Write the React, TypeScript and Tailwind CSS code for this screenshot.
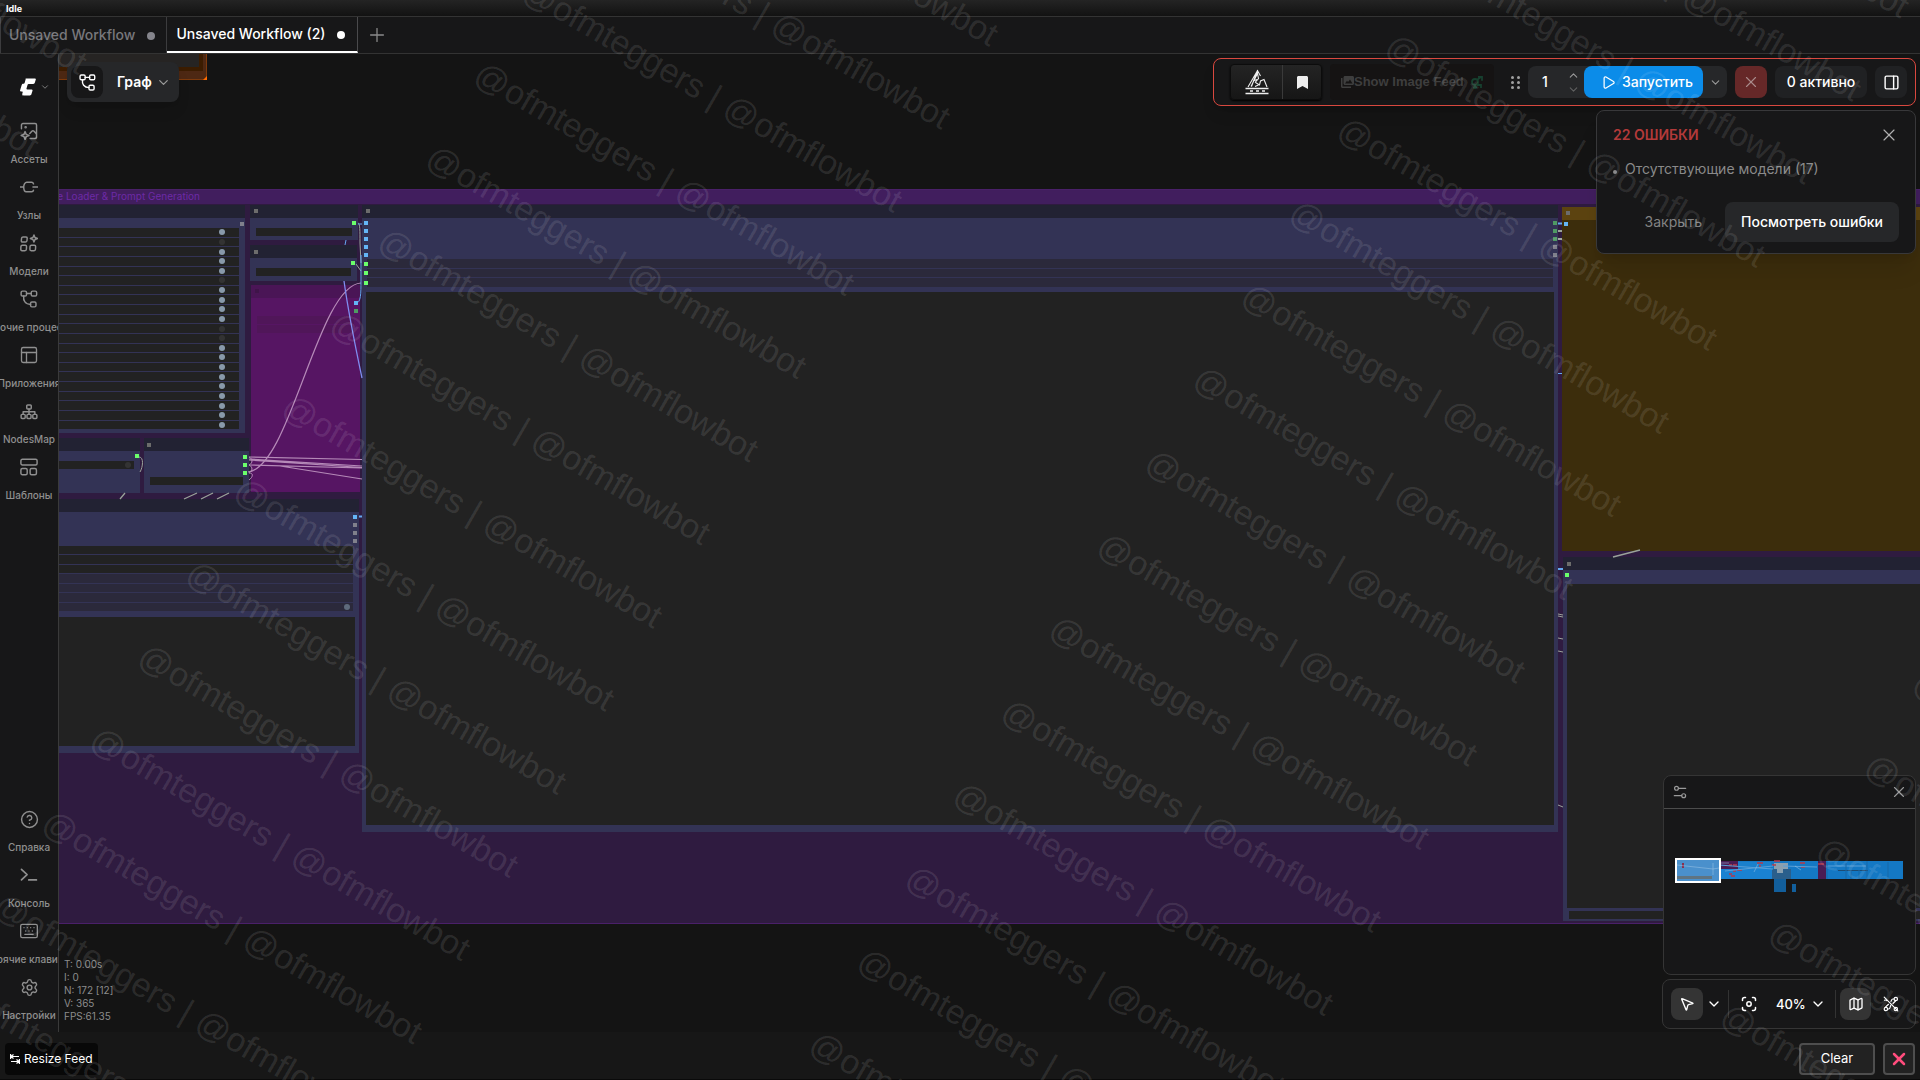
import type { CSSProperties, ReactNode } from "react";
import {
  ChevronDown,
  ChevronUp,
  CircleHelp,
  Keyboard,
  Map as MapIcon,
  MousePointer2,
  PanelRight,
  PanelsTopLeft,
  Play,
  Plus,
  Settings,
  X,
} from "lucide-react";

type Box = { x: number; y: number; w: number; h: number };

/* The canvas viewport starts at this point of the graph. */
const VIEW = { x: 59, y: 54 };

const place = (b: Box): CSSProperties => ({
  left: b.x - VIEW.x,
  top: b.y - VIEW.y,
  width: b.w,
  height: b.h,
});

function Rect({ className, ...b }: Box & { className: string }) {
  return <div className={`absolute ${className}`} style={place(b)} />;
}

const SLOT: Record<string, string> = {
  green: "bg-[#6bff6b]",
  dim: "bg-[#4f9a63]",
  blue: "bg-[#64b5f6]",
  gray: "bg-[#80808c]",
  mark: "bg-[#6c6c6c]",
  ghost: "bg-[#3f1449]",
};

function Slot({ x, y, kind, size = 4 }: { x: number; y: number; kind: string; size?: number }) {
  return <Rect x={x} y={y} w={size} h={size} className={SLOT[kind]} />;
}

function Node({
  x,
  y,
  w,
  h,
  title = "bg-[#222233]",
  body = "bg-[#333355]",
  children,
}: Box & { title?: string; body?: string; children?: ReactNode }) {
  return (
    <div className={`absolute flex flex-col ${body}`} style={place({ x, y, w, h })}>
      <div className={`h-[13px] shrink-0 ${title}`} />
      {children}
    </div>
  );
}

const TOGGLES = [
  true, false, true, true, true, false, true, true, true, true, false,
  false, true, true, true, true, true, true, true, true, true,
];

const SLOTS: [number, number, string][] = [
  [240, 222, "gray"],
  [254, 209, "mark"],
  [352, 221, "green"],
  [254, 250, "mark"],
  [351, 261, "green"],
  [255, 289, "ghost"],
  [354, 301, "blue"],
  [354, 309, "dim"],
  [366, 209, "mark"],
  [364, 221, "blue"],
  [364, 229, "blue"],
  [364, 237, "blue"],
  [364, 245, "blue"],
  [364, 253, "blue"],
  [364, 262, "green"],
  [364, 271, "green"],
  [364, 281, "green"],
  [1553, 221, "dim"],
  [1553, 229, "dim"],
  [1553, 237, "dim"],
  [1553, 245, "gray"],
  [1553, 253, "gray"],
  [135, 454, "green"],
  [147, 443, "mark"],
  [243, 455, "green"],
  [243, 463, "green"],
  [243, 471, "green"],
  [353, 515, "blue"],
  [353, 523, "gray"],
  [353, 531, "gray"],
  [353, 539, "gray"],
  [1566, 211, "mark"],
  [1564, 222, "blue"],
  [1567, 562, "mark"],
  [1565, 573, "green"],
];

function Graph() {
  return (
    <div className="absolute inset-0 overflow-hidden">
      {/* orange group */}
      <Rect x={40} y={40} w={167} h={40} className="border border-[#7d3a0c] bg-[#4d2813]" />
      <Rect x={40} y={40} w={163} h={31} className="bg-[#3b1c00]" />
      <Rect x={40} y={40} w={159} h={27} className="bg-[#262423]" />
      <Rect x={203} y={76} w={4} h={4} className="bg-[#ff6a00] [clip-path:polygon(100%_0,100%_100%,0_100%)]" />

      {/* purple group */}
      <div
        className="absolute -right-10 flex flex-col border border-[#4a2069] bg-[#2f1b40]"
        style={{ left: -200, top: 189 - VIEW.y, height: 735 }}
      >
        <div className="h-[14px] bg-[#411e5e]" />
      </div>
      <div
        className="absolute w-[300px] text-right text-[10px] leading-[14px] whitespace-nowrap text-[#6d2aa6]"
        style={{ left: 200 - 300 - VIEW.x, top: 189 - VIEW.y }}
      >
        Image Loader &amp; Prompt Generation
      </div>

      {/* toggle list */}
      <Node x={20} y={205} w={225} h={228}>
        <div className="mt-[10px] mr-[6px] flex h-[201px] flex-col gap-px">
          {TOGGLES.map((on, i) => (
            <div key={i} className="flex flex-1 items-center justify-end bg-[#222222] pr-[14px]">
              <span className={`size-[6px] rounded-full ${on ? "bg-[#8899aa]" : "bg-[#333333]"}`} />
            </div>
          ))}
        </div>
      </Node>

      <Node x={250} y={205} w={108} h={35}>
        <div className="mx-[6px] mt-[10px] h-2 bg-[#222222]" />
      </Node>
      <Node x={250} y={245} w={107} h={36}>
        <div className="mx-[6px] mt-[10px] h-2 bg-[#222222]" />
      </Node>
      <Node x={251} y={285} w={109} h={207} title="bg-[#4a1556]" body="bg-[#561563]">
        <div className="mx-[6px] mt-[18px] h-2 bg-[#501659]" />
        <div className="mx-[6px] mt-px h-2 bg-[#501659]" />
      </Node>

      {/* main preview node */}
      <Node x={362} y={205} w={1196} h={627}>
        <div className="mx-[5px] mt-[41px] flex h-7 flex-col gap-px">
          <div className="flex-1 bg-[#2b293b]" />
          <div className="flex-1 bg-[#2b293b]" />
          <div className="flex-1 bg-[#2b293b]" />
        </div>
        <div className="mx-1 mt-[5px] mb-[7px] flex-1 bg-[#222222]" />
      </Node>

      <Node x={20} y={438} w={120} h={55}>
        <div className="mt-[10px] mr-[6px] flex h-2 items-center justify-end bg-[#222222] pr-[3px]">
          <span className="size-[6px] rounded-full bg-[#333333]" />
        </div>
      </Node>
      <Node x={144} y={438} w={105} h={55}>
        <div className="mx-[6px] mt-[26px] h-2 bg-[#222222]" />
      </Node>

      <Node x={20} y={499} w={339} h={254}>
        <div className="mt-[34px] mr-[6px] flex h-[65px] flex-col gap-px">
          <div className="flex-1 bg-[#222222]" />
          <div className="flex-1 bg-[#222222]" />
          <div className="flex-1 bg-[#222222]" />
          <div className="flex-1 bg-[#2b293b]" />
          <div className="flex-1 bg-[#2b293b]" />
          <div className="flex-1 bg-[#2b293b]" />
          <div className="flex flex-1 items-center justify-end bg-[#2b293b] pr-[3px]">
            <span className="size-[6px] rounded-full bg-[#5e6a7c]" />
          </div>
        </div>
        <div className="mt-[6px] mr-1 mb-[7px] flex-1 bg-[#222222]" />
      </Node>

      <Node x={1562} y={207} w={500} h={344} title="bg-[#5c4310]" body="bg-[#3c2d0c]" />
      <Node x={1563} y={557} w={500} h={364}>
        <div className="mt-[14px] ml-1 h-[324px] bg-[#222222]" />
        <div className="mt-[3px] ml-[6px] h-2 bg-[#222222]" />
      </Node>

      {/* links */}
      <svg
        className="absolute"
        style={place({ x: 0, y: 0, w: 1920, h: 1080 })}
        viewBox="0 0 1920 1080"
        fill="none"
        strokeWidth="1"
      >
        <g stroke="#9aa39a">
          <path d="M358 223c2 0 2 8 2 20l1 20M356 264l5 7" />
          <path d="M139 457c5 0 4 10 1 15" />
          <path d="M120 499l5-6M184 499l13-6M201 499l12-6M217 499l12-6M1613 557l27-7" strokeWidth="1.300" />
          <path d="M1558 614l5 1M1558 616l5 1M1558 638l5 1M1558 651l5 1M1558 805l5 2" />
          <path d="M1558 231h4M1558 239h4" strokeWidth="2" />
        </g>
        <g stroke="#b58ab8">
          <path d="M248 472C290 468 318 285 361 283" strokeWidth="1.200" />
          <path d="M249 457L362 459.500M249 459L362 466M249 460L362 467.500M249 465L362 468M280 466L362 479" strokeWidth="1.200" />
          <path d="M249 457c4 2 4 6 0 8c4 2 4 6 0 8c5 0 4 4 0 7" />
        </g>
        <path d="M344 281C348 310 355 345 362 378" stroke="#7f8df0" strokeWidth="1.300" />
        <g stroke="#64a8f0">
          <path d="M346 240l-1 5" />
          <path d="M358 224h4M356 303c5 0 5-10 5-22v-26" />
          <path d="M359 516.500h3M1558 223.500h4M1558 569h5" strokeWidth="2" />
          <path d="M1558 373.500h4" />
        </g>
      </svg>

      {SLOTS.map(([x, y, kind]) => (
        <Slot key={`${x}-${y}`} x={x} y={y} kind={kind} />
      ))}
    </div>
  );
}

/* ---------- icons ---------- */

function Glyph({ children, size = 18, sw = 1.3 }: { children: ReactNode; size?: number; sw?: number }) {
  return (
    <svg
      width={size}
      height={size}
      viewBox="0 0 16 16"
      fill="none"
      stroke="currentColor"
      strokeWidth={sw}
      strokeLinecap="round"
      strokeLinejoin="round"
      aria-hidden="true"
    >
      {children}
    </svg>
  );
}

const AssetsIcon = () => (
  <Glyph>
    <path d="M1.300 6V2.600c0-.7.6-1.300 1.300-1.300h10.800c.7 0 1.300.6 1.300 1.300v10.800c0 .7-.6 1.300-1.300 1.300H9" />
    <path d="M14.500 10.500l-2-2.200c-.6-.6-1.400-.6-2 0L8.700 10.300" />
    <path d="M4.500 8.500l1 2.500 2.500 1-2.500 1-1 2.500-1-2.500-2.500-1 2.500-1z" />
    <circle cx="5" cy="4.700" r=".5" />
  </Glyph>
);
const NodeIcon = () => (
  <Glyph>
    <path d="M.2 8h3M11.500 8h4.300M12 5.200c-.2-.9-.8-1.500-1.700-1.500H6C4.500 3.700 3.300 6 3.300 8s.8 4.300 2.300 4.300h4.700c1 0 1.600-.7 1.700-1.500" />
  </Glyph>
);
const ModelsIcon = () => (
  <Glyph>
    <rect x="1.800" y="2.600" width="5" height="4.600" rx="1.200" transform="skewX(-6)" />
    <rect x="1.400" y="10" width="5" height="4.800" rx="1.200" transform="skewX(-3)" />
    <rect x="9.500" y="10" width="5" height="4.800" rx="1.200" transform="skewX(-3)" />
    <path d="M12.400.8l.9 2.300 2.300.9-2.300.9-.9 2.300-.9-2.300L9.200 4l2.300-.9z" />
  </Glyph>
);
const WorkflowIcon = ({ size = 18 }: { size?: number }) => (
  <Glyph size={size}>
    <rect x="1" y="1" width="4.800" height="4.400" rx="1.200" />
    <rect x="10" y="1" width="4.800" height="4.400" rx="1.200" />
    <rect x="9.400" y="10.600" width="4.800" height="4.400" rx="1.200" />
    <path d="M5.800 3.200H10M3.300 5.400c-.6 4 1.400 7.400 6.100 7.400" />
  </Glyph>
);
const SitemapIcon = () => (
  <Glyph>
    <rect x="6" y="2.600" width="4" height="3.600" rx=".8" />
    <rect x="1" y="11" width="3.600" height="3.600" rx=".8" />
    <rect x="6.200" y="11" width="3.600" height="3.600" rx=".8" />
    <rect x="11.400" y="11" width="3.600" height="3.600" rx=".8" />
    <path d="M8 6.200v4.800M2.800 11V8.600h10.400v2.400" />
  </Glyph>
);
const TemplateIcon = () => (
  <Glyph>
    <rect x=".8" y="1.200" width="14.400" height="5" rx="1.300" />
    <rect x=".8" y="9.300" width="5.600" height="5.500" rx="1.300" />
    <rect x="9" y="9.300" width="5.600" height="5.500" rx="1.300" />
  </Glyph>
);
const ConsoleIcon = () => (
  <Glyph sw={1.5}>
    <path d="M1.300 3l5 4.600-5 4.800M7.800 12.400h6.800" />
  </Glyph>
);
const SlidersIcon = () => (
  <Glyph size={14} sw={1.4}>
    <circle cx="4" cy="3.800" r="2.200" />
    <path d="M6.200 3.800H14.500M1.500 12.200h8.300" />
    <circle cx="12.200" cy="12.200" r="2.200" />
  </Glyph>
);
const FocusIcon = () => (
  <Glyph size={16} sw={1.5}>
    <path d="M1.500 4.500v-1c0-1.100.9-2 2-2h1M11.500 1.500h1c1.100 0 2 .9 2 2v1M14.500 11.500v1c0 1.100-.9 2-2 2h-1M4.500 14.500h-1c-1.100 0-2-.9-2-2v-1" />
    <circle cx="8" cy="8" r="2.200" />
  </Glyph>
);
const LinksOffIcon = () => (
  <Glyph size={16} sw={1.2}>
    <path d="M1.200 1.200l13.600 13.600" />
    <circle cx="12.800" cy="3" r="1.700" />
    <circle cx="2.900" cy="13" r="1.700" />
    <circle cx="12.800" cy="13" r="1.700" />
    <path d="M11 3H9.800C8.600 3 8.300 4.200 8 5.300M4.700 13h1c1.200 0 1.600-1.800 2-3.600M1.500 4.200c.8-.4 1.500-.2 2.300.3M5.500 8.300L2.800 10.800M10 7.500l2.500-2.500" />
  </Glyph>
);
const LogoIcon = () => (
  <svg width="16" height="18" viewBox="0 0 16 18" fill="#ffffff" aria-hidden="true">
    <path d="M6 .5h9c.7 0 1 .5.8 1.100l-1 3.200c-.2.700-.8 1.200-1.500 1.200H8.600c-.5 0-.9.3-1 .8L6.500 10.400c-.2.600.2 1.100.8 1.100h4.300c.7 0 1.100.5.9 1.200l-1.100 3.600c-.2.700-.8 1.200-1.500 1.200H3.600c-1 0-1.600-.7-1.300-1.700l.4-1.500c.1-.5-.1-.8-.6-.8H1c-.7 0-1.100-.5-.9-1.200L1.700 7c.2-.7.8-1.200 1.500-1.200h.4c.5 0 .8-.3 1-.8l1-3.400C5.700.9 5.400.5 6 .5z" />
  </svg>
);
const RigIcon = () => (
  <svg width="24" height="26" viewBox="0 0 24 26" fill="none" stroke="#eeeeee" strokeWidth="1.100" aria-hidden="true">
    <path d="M3 18L12.500 1.500l3 5.500M6 17.500l6.500-13 1 5-3.500 4M12.500 1.500L8.500 12l-2 5.500M8 12l4-1.500M10.500 13.500l4 2.500 1-4 3.500-1.500 3 7.500M10 17.500l3.500-1.500" />
    <path d="M.5 19.500h23M.5 24.500h23M5 22h3M11 22h3M17 22h3" strokeWidth="1.500" />
  </svg>
);

/* ---------- bars ---------- */

function TabBar() {
  return (
    <nav className="flex h-[38px] shrink-0 items-stretch border-y border-[#333333] bg-[#171718] text-sm font-medium">
      <button type="button" className="flex items-center gap-3 border-x border-[#3c3c3e] pr-[11px] pl-2 text-[#78787c]">
        Unsaved Workflow
        <span className="mt-[2px] size-2 rounded-full bg-[#85858c]" />
      </button>
      <button
        type="button"
        className="flex items-center gap-[12px] border-r border-b-2 border-r-[#4a4a4c] border-b-white pr-3 pl-[9px] text-white"
      >
        Unsaved Workflow (2)
        <span className="mt-[2px] size-2 rounded-full bg-white" />
      </button>
      <button type="button" aria-label="New workflow" className="grid w-[38px] place-items-center text-[#8a8a8a]">
        <Plus className="size-[22px]" strokeWidth={1.4} />
      </button>
    </nav>
  );
}

function SideItem({ icon, label }: { icon: ReactNode; label: string }) {
  return (
    <button type="button" className="flex h-14 w-full shrink-0 flex-col items-center gap-[10px] overflow-hidden pt-[6px]">
      <span className="grid h-5 shrink-0 place-items-center">{icon}</span>
      <span className="text-[10px] leading-4 font-medium whitespace-nowrap">{label}</span>
    </button>
  );
}

function Sidebar() {
  return (
    <aside className="flex w-[59px] shrink-0 flex-col justify-between border-r border-[#3a3a3a] bg-[#171718] text-[#8f8f8f]">
      <div className="flex flex-col">
        <button type="button" aria-label="Menu" className="flex h-[61px] items-center gap-1 pt-1 pl-5">
          <LogoIcon />
          <ChevronDown className="size-[10px]" />
        </button>
        <SideItem icon={<AssetsIcon />} label="Ассеты" />
        <SideItem icon={<NodeIcon />} label="Узлы" />
        <SideItem icon={<ModelsIcon />} label="Модели" />
        <SideItem icon={<WorkflowIcon />} label="Рабочие процессы" />
        <SideItem icon={<PanelsTopLeft className="size-5" strokeWidth={1.6} />} label="Приложения" />
        <SideItem icon={<SitemapIcon />} label="NodesMap" />
        <SideItem icon={<TemplateIcon />} label="Шаблоны" />
      </div>
      <div className="flex flex-col pb-[5px]">
        <SideItem icon={<CircleHelp className="size-[19px]" strokeWidth={1.8} />} label="Справка" />
        <SideItem icon={<ConsoleIcon />} label="Консоль" />
        <SideItem icon={<Keyboard className="size-5" strokeWidth={1.6} />} label="Горячие клавиши" />
        <SideItem icon={<Settings className="size-[19px]" strokeWidth={1.8} />} label="Настройки" />
      </div>
    </aside>
  );
}

function ActionBar() {
  return (
    <div className="flex h-12 items-center rounded-lg border border-[#d9483f] bg-[#171718] pr-2 pl-4 text-sm font-medium text-white shadow-lg">
      <div className="flex h-9 overflow-hidden rounded border border-[#0c0c0c] bg-gradient-to-b from-[#242424] to-[#161616] shadow-[0_1px_2px_#000]">
        <button type="button" aria-label="Manager" className="grid w-[52px] place-items-center border-r border-[#3a3a3a]">
          <RigIcon />
        </button>
        <button type="button" aria-label="Bookmarks" className="grid w-[38px] place-items-center">
          <svg width="11" height="13" viewBox="0 0 11 13" fill="#eeeeee" aria-hidden="true">
            <path d="M0 1.500C0 .7.7 0 1.500 0h8c.8 0 1.500.7 1.500 1.500V13L5.500 10 0 13z" />
          </svg>
        </button>
      </div>
      <button
        type="button"
        className="ml-2 flex h-9 w-[164px] items-center rounded bg-[#151313] pl-[11px] font-['Liberation_Sans',sans-serif] text-[13px] font-bold text-[#3e3e3e]"
      >
        <svg width="13" height="12" viewBox="0 0 13 12" fill="#3e3e3e" aria-hidden="true">
          <path d="M0 2h1.500v8.500H10V12H1.500C.7 12 0 11.300 0 10.500zM4 0h7.500c.8 0 1.500.7 1.500 1.500v6c0 .8-.7 1.500-1.500 1.500H4c-.8 0-1.500-.7-1.500-1.500v-6C2.500.7 3.200 0 4 0zm0 7.500h7.500L9 3.500 7 6 6 4.800z" />
        </svg>
        <span className="whitespace-nowrap">Show Image Feed</span>
        <svg className="ml-[6px]" width="13" height="13" viewBox="0 0 13 13" fill="none" stroke="#17402f" strokeWidth="1.800" aria-hidden="true">
          <circle cx="5" cy="6" r="3" />
          <path d="M7 4l4.500-3.500M8 .8h4v4M5 9v4M3 11.500h4M7 9h4v3" />
        </svg>
      </button>
      <div className="ml-[17px] grid grid-cols-2 gap-x-[3px] gap-y-[2px]">
        {[0, 1, 2, 3, 4, 5].map((i) => (
          <span key={i} className="size-[3px] rounded-full bg-[#a0a0a0]" />
        ))}
      </div>
      <div className="ml-2 flex h-8 items-stretch overflow-hidden rounded-lg bg-[#262729]">
        <input aria-label="Batch count" defaultValue="1" className="w-[34px] bg-transparent text-center outline-none" />
        <div className="flex w-[22px] flex-col items-center justify-between pt-[3px] pb-[2px] text-[#9a9a9a]">
          <ChevronUp className="size-[13px]" />
          <ChevronDown className="size-[13px] text-[#606060]" />
        </div>
        <button type="button" className="flex w-[119px] items-center gap-[6px] rounded-lg bg-[#0b8ce9] pl-[17px]">
          <Play className="size-[15px]" />
          Запустить
        </button>
        <button type="button" aria-label="Run options" className="grid w-6 place-items-center text-[#9a9a9a]">
          <ChevronDown className="size-[13px]" />
        </button>
      </div>
      <button type="button" aria-label="Stop" className="ml-2 grid size-8 place-items-center rounded-lg bg-[#662828] text-[#a98c8c]">
        <X className="size-[18px]" strokeWidth={1.5} />
      </button>
      <button type="button" className="ml-2 h-8 w-[92px] rounded-lg bg-[#202123] whitespace-nowrap">
        0 активно
      </button>
      <button type="button" aria-label="Toggle panel" className="ml-2 grid size-8 place-items-center rounded-lg bg-[#202123]">
        <PanelRight className="size-[17px]" />
      </button>
    </div>
  );
}

function ErrorCard() {
  return (
    <section className="mt-1 flex w-[320px] flex-col rounded-lg border border-[#38383a] bg-[#171718] pt-3 pr-4 pb-[11px] pl-4 text-sm shadow-xl">
      <header className="flex items-center justify-between">
        <h2 className="leading-6 font-semibold text-[#b33a3a]">22 ОШИБКИ</h2>
        <button type="button" aria-label="Dismiss" className="text-[#b0b0b0]">
          <X className="size-5" strokeWidth={1.4} />
        </button>
      </header>
      <ul className="mt-3 text-[#8a8a8a]">
        <li className="flex items-center gap-2 leading-5">
          <span className="mt-[6px] size-1 rounded-full bg-[#8a8a8a]" />
          Отсутствующие модели (17)
        </li>
      </ul>
      <footer className="mt-[23px] flex items-center justify-end gap-[23px]">
        <button type="button" className="text-[#838383]">Закрыть</button>
        <button type="button" className="h-10 rounded-lg bg-[#262729] px-4 font-medium whitespace-nowrap text-white">
          Посмотреть ошибки
        </button>
      </footer>
    </section>
  );
}

function MiniMap() {
  return (
    <section className="flex h-[200px] w-[253px] flex-col rounded-lg border border-[#353535] bg-[#171718]">
      <header className="flex h-[33px] items-center justify-between border-b border-[#4c4c4c] pr-[7px] pl-[9px] text-[#9a9a9a]">
        <button type="button" aria-label="Minimap settings">
          <SlidersIcon />
        </button>
        <button type="button" aria-label="Close minimap">
          <X className="size-[18px]" strokeWidth={1.5} />
        </button>
      </header>
      <svg className="mt-12 ml-[11px]" width="230" height="37" viewBox="0 0 230 37" aria-label="Minimap">
        <rect x="1" y="4" width="227" height="18" fill="#1478c4" />
        <rect x="1" y="2" width="43" height="22" fill="#4a90cc" />
        <rect x="46" y="4" width="17" height="8" fill="#4a1c54" />
        <rect x="46" y="12" width="52" height="10" fill="#1a82d2" />
        <rect x="63" y="5" width="33" height="7" fill="#1a80cc" />
        <rect x="143" y="4" width="8" height="18" fill="#4a1c54" />
        <rect x="99" y="20" width="12" height="15" fill="#125f9c" />
        <rect x="117" y="27" width="4" height="8" fill="#125f9c" />
        <rect x="97" y="12" width="19" height="10" fill="#2a5f8c" />
        <rect x="2" y="19" width="35" height="3" fill="#5f7482" />
        <path d="M99 6h14v6H99zM102 12h6v4h-6z" fill="#8aa0b0" />
        <path d="M54 8h3M58 8h4M58 14h3M62 13h5M54 17h3M56 19h4M82 6h6M84 9h2M99 4h6M97 8h4M125 6h5M126 10h4M143 7h6" stroke="#b83848" strokeWidth="1.500" fill="none" />
        <path d="M8 6v5" stroke="#8a3050" strokeWidth="2" />
        <path d="M44 8l54 4M50 14l48-5M108 9l34 1M151 9h40" stroke="#5aa0d8" fill="none" />
        <path d="M163 13.500h30" stroke="#1c4c74" />
        <path d="M171 6v16M176 13v9M184 13v9M192 4v18M213 5v17M152 5v17" stroke="#1668a8" fill="none" />
        <path d="M2 8l36 4 6-1M46 6h8M79 15l4-8M120 9l6 4M38 6v12" stroke="#9fc8e8" opacity=".5" fill="none" />
        <rect x="1" y="2" width="44" height="23" fill="none" stroke="#ffffff" strokeWidth="2" />
      </svg>
    </section>
  );
}

function ViewTools() {
  return (
    <div className="mt-1 flex h-[50px] w-[254px] items-center rounded-lg border border-[#353535] bg-[#171718] px-2 text-sm font-medium text-white">
      <button type="button" aria-label="Select" className="grid size-8 place-items-center rounded-lg bg-[#343434]">
        <MousePointer2 className="size-4" />
      </button>
      <button type="button" aria-label="Mode menu" className="grid w-6 place-items-center">
        <ChevronDown className="size-4" />
      </button>
      <span className="ml-[2px] h-7 w-px bg-[#333333]" />
      <button type="button" aria-label="Fit view" className="ml-1 grid size-8 place-items-center">
        <FocusIcon />
      </button>
      <button type="button" className="ml-1 flex h-8 items-center gap-1 pl-[7px] text-[13px]">
        40%
        <ChevronDown className="size-4" />
      </button>
      <span className="ml-[9px] h-7 w-px bg-[#333333]" />
      <button type="button" aria-label="Toggle minimap" className="ml-1 grid size-8 place-items-center rounded-lg bg-[#343434]">
        <MapIcon className="size-4" />
      </button>
      <button type="button" aria-label="Hide links" className="ml-1 grid size-8 place-items-center">
        <LinksOffIcon />
      </button>
    </div>
  );
}

/* ---------- tiled watermark ---------- */

const WM_ROWS = Array.from({ length: 22 }, (_, i) => i);
const WM_COLS = [0, 1, 2, 3];

function Watermark() {
  return (
    <div className="pointer-events-none absolute inset-0 overflow-hidden">
      <div className="absolute top-0 left-0 origin-top-left rotate-30">
        <div className="absolute -top-[1090px] -left-[326px] font-['Liberation_Sans',Arial,sans-serif] text-[34px] leading-[96px] text-white/11">
          {WM_ROWS.map((r) => (
            <div key={r} className="flex h-24">
              {WM_COLS.map((c) => (
                <span key={c} className="w-[775px] shrink-0 whitespace-nowrap">
                  @ofmteggers | @ofmflowbot
                </span>
              ))}
            </div>
          ))}
        </div>
      </div>
    </div>
  );
}

export default function App() {
  return (
    <div className="relative flex h-screen flex-col overflow-hidden bg-[#171718] font-[Inter,'Noto_Sans',sans-serif] text-white">
      <div className="h-4 shrink-0 bg-gradient-to-b from-[#242424] to-[#121212] pt-[3px] pl-[6px] text-[9px] leading-3 font-bold">
        Idle
      </div>
      <TabBar />
      <div className="flex min-h-0 flex-1">
        <Sidebar />
        <main className="relative flex min-w-0 flex-1 flex-col justify-between bg-[#141414]">
          <Graph />
          <div className="relative flex items-start justify-between pt-1 pr-1 pl-2">
            <div className="mt-1 flex h-10 items-center rounded-lg bg-[#262729] pr-2 pl-1 shadow-lg">
              <span className="grid size-8 place-items-center rounded-lg bg-[#171718]">
                <WorkflowIcon size={17} />
              </span>
              <button type="button" className="ml-[14px] flex items-center gap-1 text-sm font-semibold">
                Граф
                <ChevronDown className="size-[15px] text-[#9a9a9a]" />
              </button>
            </div>
            <div className="flex flex-col items-end">
              <ActionBar />
              <ErrorCard />
            </div>
          </div>
          <div className="relative flex items-end justify-between pr-1 pb-[3px] pl-[5px]">
            <pre className="mb-[6px] font-[Inter,sans-serif] text-[10px] leading-[13px] text-[#8c8c8c]">
              {"T: 0.00s\nI: 0\nN: 172 [12]\nV: 365\nFPS:61.35"}
            </pre>
            <div className="flex flex-col items-end">
              <MiniMap />
              <ViewTools />
            </div>
          </div>
        </main>
      </div>
      <footer className="flex h-12 shrink-0 items-center justify-between border-b border-[#0a0a0a] bg-[#171717] px-[5px] pt-[6px]">
        <button type="button" className="flex h-8 items-center gap-1 rounded bg-[#080808] px-[5px] text-xs">
          <svg width="10" height="10" viewBox="0 0 10 10" fill="none" stroke="#ffffff" strokeWidth="1.200" aria-hidden="true">
            <path d="M.6 0v5M1 2.500h8M3.500.5L1 2.500l2.500 2M9.400 5v5M1 7.500h8M6.500 5.500L9 7.500l-2.500 2" />
          </svg>
          Resize Feed
        </button>
        <div className="flex items-center gap-2">
          <button type="button" className="h-8 w-[76px] rounded border-2 border-[#4e4e4e] bg-[#222222] text-[13px]">
            Clear
          </button>
          <button type="button" aria-label="Close feed" className="grid size-8 place-items-center rounded border-2 border-[#4e4e4e] bg-[#222222] text-[#ff4d7d]">
            <X className="size-5" strokeWidth={3} />
          </button>
        </div>
      </footer>
      <Watermark />
    </div>
  );
}
